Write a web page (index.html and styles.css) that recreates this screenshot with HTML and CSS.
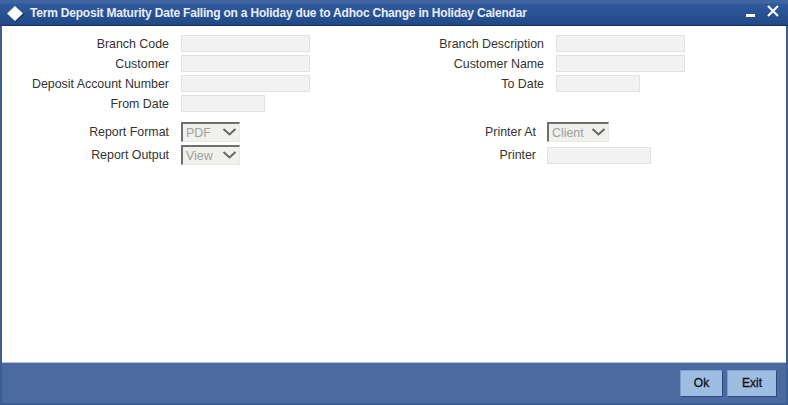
FILE: index.html
```html
<!DOCTYPE html>
<html>
<head>
    <title>Term Deposit Maturity Date</title>
    <link rel="stylesheet" href="styles.css">
</head>
<body>
    <div class="window">
        <div class="titlebar">
            <svg class="logo" width="26" height="24" viewBox="0 0 26 24">
                <path d="M20 12.5 L22 12.5 L13 21 L12 20 Z" fill="#0f2f63"/>
                <path d="M4 12.5 L12 5 L20 12.5 L12 20 Z" fill="#fff"/>
            </svg>
            <span class="title">Term Deposit Maturity Date Falling on a Holiday due to Adhoc Change in Holiday Calendar</span>
            <svg class="win-btns" width="36" height="20" viewBox="0 0 36 20">
                <rect x="0" y="11" width="9" height="3" fill="#fff"/>
                <path d="M22 3 L32 13 M32 3 L22 13" stroke="#fff" stroke-width="2" fill="none"/>
            </svg>
        </div>

        <div class="content">
            <!-- Text fields -->
            <div class="fields">
                <div class="row">
                    <label class="lbl">Branch Code</label>
                    <input class="txt" type="text" disabled>
                    <label class="lbl lbl-right">Branch Description</label>
                    <input class="txt" type="text" disabled>
                </div>
                <div class="row">
                    <label class="lbl">Customer</label>
                    <input class="txt" type="text" disabled>
                    <label class="lbl lbl-right">Customer Name</label>
                    <input class="txt" type="text" disabled>
                </div>
                <div class="row">
                    <label class="lbl">Deposit Account Number</label>
                    <input class="txt" type="text" disabled>
                    <label class="lbl lbl-right">To Date</label>
                    <input class="txt txt-date" type="text" disabled>
                </div>
                <div class="row">
                    <label class="lbl">From Date</label>
                    <input class="txt txt-date" type="text" disabled>
                </div>
            </div>

            <!-- Report options -->
            <div class="options">
                <div class="row row-opt">
                    <label class="lbl">Report Format</label>
                    <div class="sel sel-left"><span>PDF</span><svg width="15" height="9" viewBox="0 0 15 9"><path d="M1.5 1 L7.5 6.5 L13.5 1" stroke="#666" stroke-width="2" fill="none"/></svg></div>
                    <label class="lbl lbl-printer">Printer At</label>
                    <div class="sel sel-right"><span>Client</span><svg width="15" height="9" viewBox="0 0 15 9"><path d="M1.5 1 L7.5 6.5 L13.5 1" stroke="#666" stroke-width="2" fill="none"/></svg></div>
                </div>
                <div class="row row-opt">
                    <label class="lbl">Report Output</label>
                    <div class="sel sel-left"><span>View</span><svg width="15" height="9" viewBox="0 0 15 9"><path d="M1.5 1 L7.5 6.5 L13.5 1" stroke="#666" stroke-width="2" fill="none"/></svg></div>
                    <label class="lbl lbl-printer">Printer</label>
                    <input class="txt txt-printer" type="text" disabled>
                </div>
            </div>
        </div>

        <div class="footer">
            <button class="btn">Ok</button>
            <button class="btn btn-exit">Exit</button>
        </div>
    </div>
</body>
</html>
```

FILE: styles.css
```css
html, body {
    margin: 0;
    padding: 0;
}

body {
    font-family: "Liberation Sans", Arial, sans-serif;
    font-size: 12.4px;
    color: #333;
    background-color: #fff;
}

.window {
    width: 788px;
    height: 405px;
    box-sizing: border-box;
    display: flex;
    flex-direction: column;
    background-color: #3c5c96;
    border-left: 2px solid #3c5c96;
    border-right: 2px solid #3c5c96;
    border-bottom: 2px solid #3c5c96;
}

.titlebar {
    height: 26px;
    flex: none;
    display: flex;
    align-items: center;
    box-sizing: border-box;
    margin: 0 -2px;
    padding-top: 3px;
    background: linear-gradient(to bottom, #3f64a0 0, #3f64a0 3px, #2f5a9e 4px, #234a87 24px, #12305f 26px);
}

.logo {
    flex: none;
    margin-left: 3px;
    margin-top: -3px;
}

.title {
    flex: 1;
    margin-left: 1px;
    margin-top: -3px;
    color: #e9eef6;
    font-weight: bold;
    font-size: 12px;
    letter-spacing: -0.2px;
    white-space: nowrap;
}

.win-btns {
    flex: none;
    margin-right: 6px;
    margin-top: -3px;
}

.content {
    flex: 1;
    background-color: #fff;
    padding-top: 9px;
}

.fields {
    display: flex;
    flex-direction: column;
    gap: 3px;
}

.options {
    display: flex;
    flex-direction: column;
    gap: 3px;
    margin-top: 10px;
}

.row {
    display: flex;
    align-items: center;
    height: 17px;
}

.row-opt {
    height: 20px;
}

.lbl {
    width: 167px;
    flex: none;
    text-align: right;
    white-space: nowrap;
}

.lbl-right {
    width: 234px;
}

.lbl-printer {
    width: 296px;
}

.txt {
    width: 129px;
    height: 17px;
    flex: none;
    box-sizing: border-box;
    margin: 0 0 0 12px;
    padding: 0;
    border: 1px solid #e2e2e0;
    background-color: #f2f2f2;
}

.txt-date {
    width: 84px;
}

.txt-printer {
    width: 104px;
    margin-left: 11px;
}

.sel {
    flex: none;
    box-sizing: border-box;
    height: 20px;
    display: flex;
    align-items: center;
    justify-content: space-between;
    padding: 0 2px 0 3px;
    margin-left: 12px;
    background-color: #f0f0ec;
    color: #a0a0a0;
    border-top: 2px solid #6f6f6f;
    border-left: 2px solid #6f6f6f;
    border-right: 1px solid #e8e8e4;
    border-bottom: 1px solid #e8e8e4;
}

.sel-left {
    width: 59px;
}

.sel-right {
    width: 62px;
    margin-left: 11px;
}

.footer {
    height: 40px;
    flex: none;
    display: flex;
    justify-content: flex-end;
    align-items: center;
    gap: 4px;
    padding-right: 9px;
    background-color: #4a6aa0;
    border-top: 1px solid #b4c3dc;
}

.btn {
    width: 43px;
    height: 27px;
    padding: 0;
    font-family: "Liberation Sans", Arial, sans-serif;
    font-size: 12px;
    color: #111;
    -webkit-text-stroke: 0.3px #111;
    background-color: #9dbde3;
    border: 1px solid #7f9cc6;
    border-right-color: #2f4a7a;
    border-bottom-color: #2f4a7a;
}

.btn-exit {
    width: 50px;
}
```
